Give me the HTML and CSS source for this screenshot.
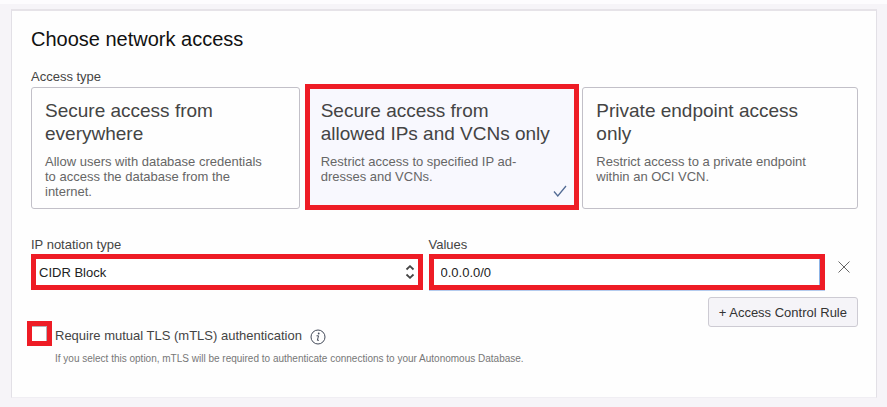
FILE: index.html
```html
<!DOCTYPE html>
<html lang="en">
<head>
<meta charset="utf-8">
<meta name="viewport" content="width=device-width, initial-scale=1">
<title>Choose network access</title>
<link rel="stylesheet" href="styles.css">
</head>
<body>
<main class="panel">
  <h1 class="title">Choose network access</h1>
  <fieldset class="access">
    <legend class="label">Access type</legend>
    <div class="cards">
      <label class="card">
        <input class="card-radio" type="radio" name="access">
        <span class="card-title">Secure access from everywhere</span>
        <span class="card-text">Allow users with database credentials to access the database from the internet.</span>
      </label>
      <label class="card card-selected">
        <input class="card-radio" type="radio" name="access" checked>
        <span class="card-title">Secure access from allowed IPs and VCNs only</span>
        <span class="card-text">Restrict access to specified IP ad-<br>dresses and VCNs.</span>
        <svg class="card-check" viewBox="0 0 14 12" aria-hidden="true"><path d="M1 6.5 4.8 11 13 1"/></svg>
      </label>
      <label class="card">
        <input class="card-radio" type="radio" name="access">
        <span class="card-title">Private endpoint access only</span>
        <span class="card-text">Restrict access to a private endpoint within an OCI VCN.</span>
      </label>
    </div>
  </fieldset>

  <div class="rule">
    <div class="field">
      <label class="label" for="notation">IP notation type</label>
      <div class="select-wrap">
        <select class="control select" id="notation"><option>CIDR Block</option></select>
        <svg class="select-arrows" viewBox="0 0 10 14" aria-hidden="true"><path d="M1.5 4.5 5 1.2 8.500 4.500M1.500 9.500 5 12.800 8.500 9.500"/></svg>
      </div>
    </div>
    <div class="field">
      <label class="label" for="values">Values</label>
      <input class="control values" id="values" type="text" value="0.0.0.0/0">
    </div>
    <button class="remove" type="button" aria-label="Remove rule">
      <svg viewBox="0 0 12 12" width="12" height="12" aria-hidden="true"><path d="M.5.5l11 11M11.500.500l-11 11"/></svg>
    </button>
  </div>

  <div class="actions"><button class="add" type="button">+ Access Control Rule</button></div>

  <div class="mtls">
    <input class="check" id="mtls" type="checkbox" aria-describedby="mtls-help">
    <label class="mtls-label" for="mtls">Require mutual TLS (mTLS) authentication</label>
    <svg class="info" viewBox="0 0 16 16" aria-hidden="true"><circle cx="8" cy="8" r="7"/><path d="M6.500 6.800h2L7.400 11.300h1.500"/><circle class="dot" cx="8.700" cy="4.500" r=".9"/></svg>
  </div>
  <p class="help" id="mtls-help">If you select this option, mTLS will be required to authenticate connections to your Autonomous Database.</p>
</main>
</body>
</html>
```
FILE: styles.css
```css
* {
  box-sizing: border-box;
}

body {
  margin: 0;
  padding: 5px 10px 8px 11px;
  border-top: 4px solid #fdfcfe;
  background: #f6f4f8;
  color: #444;
  font: 13px/15px "Liberation Sans", Arial, sans-serif;
}

.panel {
  padding: 16px 18px 31px 19px;
  border: 1px solid #e2e0e6;
  border-top: 2px solid #e6e3e8;
  border-bottom-color: #f0eef3;
  background: #fefefe;
}

.title {
  margin: 0 0 17px;
  color: #111;
  font-size: 20px;
  font-weight: 400;
  line-height: 24px;
}

.access {
  min-width: 0;
  margin: 0;
  padding: 0;
  border: 0;
}

.label {
  display: block;
  padding: 0;
  color: #444;
  line-height: 18px;
}

.cards {
  display: grid;
  grid-template-columns: 269fr 275fr 276fr;
  gap: 4px;
  padding-top: 1px;
}

.card {
  position: relative;
  display: flex;
  flex-direction: column;
  min-height: 122px;
  padding: 11px 28px 9px 13px;
  border: 1px solid #c2c0c8;
  border-radius: 3px;
}

.card-selected {
  margin: -3px -1px -1px 1px;
  padding: 10px 22px 9px 11px;
  border: 5px solid #ee1c25;
  border-radius: 0;
  background: #f8f8fe;
}

.card-radio {
  position: absolute;
  inset: 0;
  margin: 0;
  appearance: none;
}

.card-title {
  margin-bottom: 9px;
  color: #444;
  font-size: 19px;
  line-height: 23px;
}

.card-text {
  color: #666;
}

.card-check {
  position: absolute;
  right: 7px;
  bottom: 8px;
  width: 14px;
  height: 12px;
  fill: none;
  stroke: #526b94;
  stroke-width: 1.3;
}

.rule {
  display: grid;
  grid-template-columns: 392fr 397fr 33px;
  align-items: end;
  column-gap: 6px;
  margin-top: 27px;
  margin-right: -6px;
}

.control {
  display: block;
  width: 100%;
  height: 36px;
  margin: 0;
  border: 5px solid #ee1c25;
  border-radius: 0;
  background: #fff;
  color: #222;
  font: inherit;
  outline: 0;
  appearance: none;
}

.select-wrap {
  position: relative;
}

.select {
  padding: 0 20px 0 3px;
}

.select-arrows {
  position: absolute;
  top: 11px;
  right: 8px;
  width: 10px;
  height: 14px;
  fill: none;
  stroke: #444;
  stroke-width: 1.8;
  pointer-events: none;
}

.values {
  padding: 0 7px;
  box-shadow: inset -1px 0 #8db4e6, 0 1px #b4cbee;
}

.remove {
  align-self: end;
  display: flex;
  margin: 0 0 17px;
  padding: 0 7px;
  border: 0;
  background: none;
}

.remove svg {
  fill: none;
  stroke: #666;
}

.actions {
  display: flex;
  justify-content: flex-end;
  margin-top: 7px;
}

.add {
  height: 30px;
  padding: 0 10px;
  border: 1px solid #cdcbd3;
  border-radius: 3px;
  background: #f5f4f8;
  color: #333;
  font: inherit;
}

.mtls {
  display: flex;
  align-items: center;
  margin: -6px 0 0 -4px;
}

.check {
  width: 25px;
  height: 25px;
  margin: 0;
  border: 5px solid #ee1c25;
  background: #fff;
  box-shadow: inset -1px 1px #b4b2ba;
  appearance: none;
}

.mtls-label {
  margin: 4px 8px 0 3px;
}

.info {
  width: 16px;
  height: 16px;
  margin-top: 6px;
  fill: none;
  stroke: #444b5a;
}

.info .dot {
  fill: #444b5a;
  stroke: none;
}

.help {
  margin: 5px 0 0 24px;
  color: #777;
  font-size: 10px;
}
```
